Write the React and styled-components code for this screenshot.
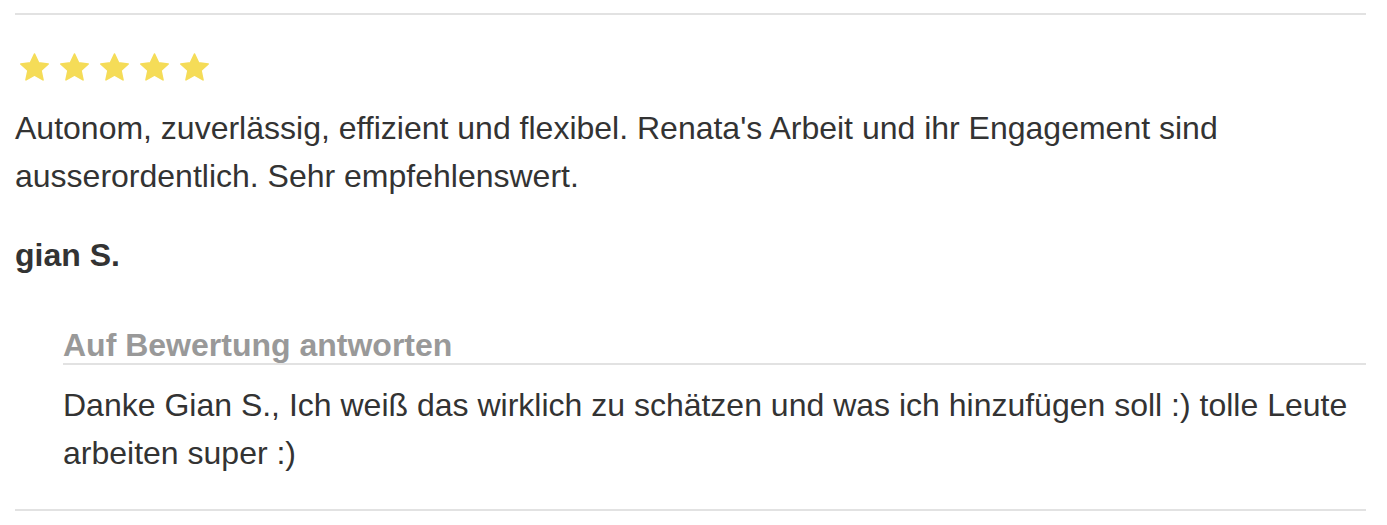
import React from "react";
import styled, { createGlobalStyle } from "styled-components";

const Global = createGlobalStyle`
  html, body { margin: 0; padding: 0; background: #fff; }
  body { font-family: "Liberation Sans", Arial, sans-serif; color: #333; }
`;

const Wrap = styled.div`
  margin: 13px 21px 0 15px;
`;

const Review = styled.article`
  border-top: 2px solid #e2e2e2;
  border-bottom: 2px solid #e2e2e2;
  padding: 38px 0 32px;
`;

const Stars = styled.div`
  display: flex;
  gap: 11px;
  padding-left: 5px;
  height: 28px;
  margin-bottom: 23px;
`;

const Text = styled.p`
  margin: 0;
  font-size: 32px;
  line-height: 48px;
`;

const Author = styled.p`
  margin: 31px 0 0;
  font-size: 32px;
  line-height: 48px;
  font-weight: bold;
`;

const Reply = styled.div`
  margin: 48px 0 0 48px;
`;

const ReplyTitle = styled.h4`
  margin: 0;
  font-size: 32px;
  line-height: 36px;
  font-weight: bold;
  color: #999;
  border-bottom: 2px solid #e2e2e2;
`;

const ReplyText = styled.p`
  margin: 16px 0 0;
  font-size: 32px;
  line-height: 48px;
`;

const Star = () => (
  <svg width="29" height="28" viewBox="1.1 0.6 21.8 20.6">
    <path
      d="M12 1.2l3.1 6.6 7.2.8-5.4 4.9 1.5 7.1L12 17l-6.4 3.6 1.5-7.1L1.7 8.6l7.2-.8z"
      fill="#f5dc58"
      stroke="#f5dc58"
      strokeWidth="1.2"
      strokeLinejoin="round"
    />
  </svg>
);

export default function App() {
  return (
    <>
      <Global />
      <Wrap>
        <Review>
          <Stars>
            {[0, 1, 2, 3, 4].map((i) => (
              <Star key={i} />
            ))}
          </Stars>
          <Text>
            Autonom, zuverlässig, effizient und flexibel. Renata's Arbeit und ihr Engagement sind
            ausserordentlich. Sehr empfehlenswert.
          </Text>
          <Author>gian S.</Author>
          <Reply>
            <ReplyTitle>Auf Bewertung antworten</ReplyTitle>
            <ReplyText>
              Danke Gian S., Ich weiß das wirklich zu schätzen und was ich hinzufügen soll :) tolle Leute
              arbeiten super :)
            </ReplyText>
          </Reply>
        </Review>
      </Wrap>
    </>
  );
}
